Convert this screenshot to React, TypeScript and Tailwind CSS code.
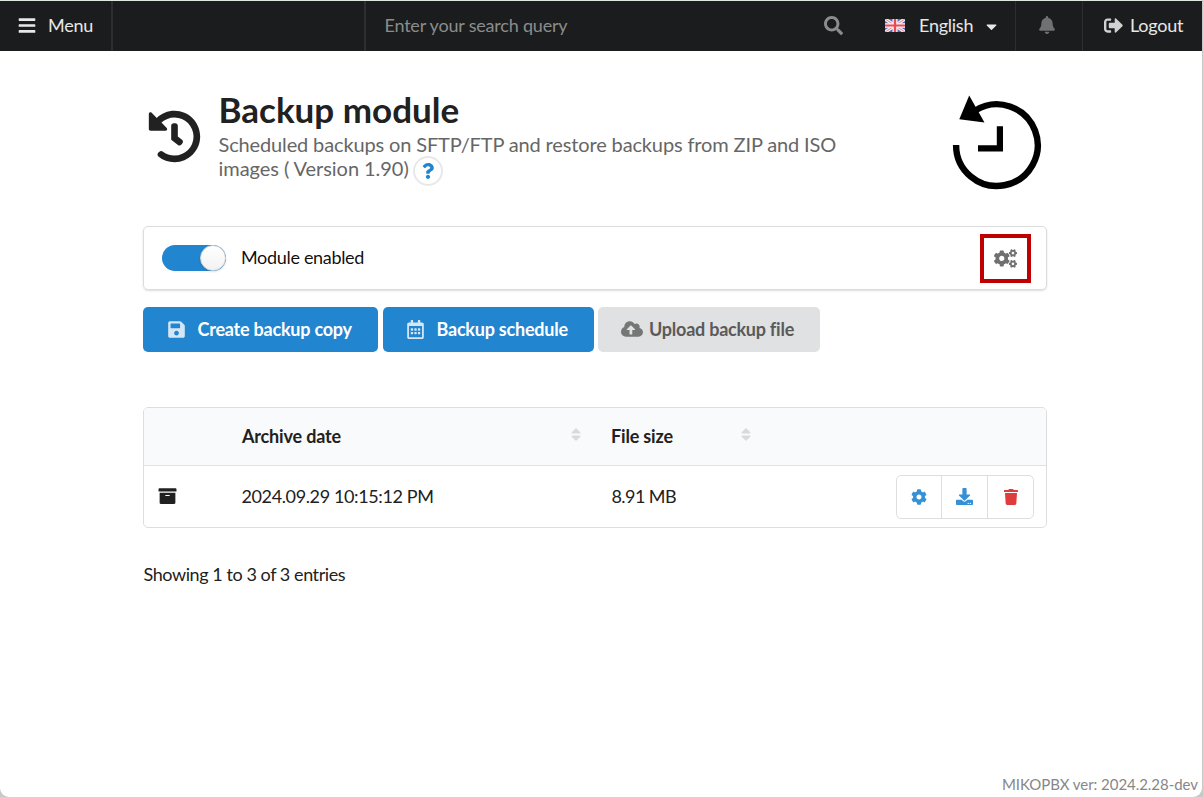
import type { ReactNode } from "react";
import {
  FaArchive,
  FaBars,
  FaBell,
  FaCaretDown,
  FaCloudUploadAlt,
  FaCog,
  FaCogs,
  FaDownload,
  FaHistory,
  FaQuestion,
  FaRegCalendarAlt,
  FaSave,
  FaSearch,
  FaSignOutAlt,
  FaSort,
  FaTrash,
} from "react-icons/fa";

function UkFlag() {
  return (
    <svg width="20" height="13" viewBox="0 0 20 14" preserveAspectRatio="none" className="-mt-[1px] shrink-0">
      <rect width="20" height="14" fill="#5468b8" />
      <path d="M0 0L20 14M20 0L0 14" stroke="#f3eef4" strokeWidth="3.6" />
      <path d="M0 0L20 14M20 0L0 14" stroke="#e88a94" strokeWidth="1.1" />
      <path d="M10 0V14M0 7H20" stroke="#fbf3f5" strokeWidth="5" />
      <path d="M10 0V14M0 7H20" stroke="#ea4a55" strokeWidth="2.4" />
    </svg>
  );
}

function ModuleLogo() {
  return (
    <svg width="92" height="96" viewBox="0 0 92 96" fill="none" className="shrink-0">
      <path d="M6.1 50A40.8 40.8 0 1 0 25.5 15.4" stroke="#000" strokeWidth="6.4" />
      <path d="M19.2 0.5L9.3 24.2L34.5 27.4Z" fill="#000" />
      <path d="M28 53.4H49.9V31.2" stroke="#000" strokeWidth="6.2" />
    </svg>
  );
}

function TopBar() {
  return (
    <header className="flex h-[51px] items-stretch border-t border-[#dfe8e0] bg-[#1b1c1d] text-[18px] tracking-[-0.25px] text-white/90">
      <div className="flex w-[113px] items-center border-r-2 border-[#2d2e2f] pl-[18px]">
        <FaBars className="-mt-[1px] h-[19px] w-[18px]" />
        <span className="-mt-[2px] ml-[12px]">Menu</span>
      </div>
      <div className="w-[253px] border-r-2 border-[#2d2e2f]" />
      <div className="flex w-[496px] items-center justify-between pr-[19px] pl-[18.5px] text-[#8b8c8c]">
        <span className="-mt-[2px] tracking-[-0.2px]">Enter your search query</span>
        <FaSearch className="-mt-[2px] h-[19px] w-[19px]" />
      </div>
      <div className="flex w-[154px] items-center border-r border-[#2d2e2f] pl-[23px]">
        <UkFlag />
        <span className="-mt-[2px] ml-[14px]">English</span>
        <FaCaretDown className="ml-[13px] h-[17px] w-[11px]" />
      </div>
      <div className="flex w-[67px] items-center justify-center border-r border-[#2d2e2f] pr-[5px]">
        <FaBell className="-mt-[2px] h-[18px] w-[16px] text-[#707171]" />
      </div>
      <div className="flex items-center pl-[21px]">
        <FaSignOutAlt className="-mt-[2px] h-[19px] w-[19px] text-[#d1d2d2]" />
        <span className="-mt-[2px] ml-[7px]">Logout</span>
      </div>
    </header>
  );
}

function ActionCell({ children }: { children: ReactNode }) {
  return <button className="flex w-[45px] items-center justify-center">{children}</button>;
}

export default function App() {
  return (
    <div className="flex h-[797px] w-[1203px] flex-col overflow-hidden bg-[#c8c8c8] font-['Lato',sans-serif] text-[18px] whitespace-nowrap text-[#212121]">
      <div className="flex h-[797px] w-[1202px] flex-col rounded-b-[9px] bg-white">
        <TopBar />
        <main className="ml-[143px] flex w-[904px] grow flex-col">
          <div className="flex h-[175px] items-start">
            <FaHistory className="mt-[59px] ml-[5px] h-[53px] w-[53px] shrink-0" />
            <div className="ml-[17px] pt-[37px]">
              <h1 className="h-[44px] pl-[0.5px] text-[35px] leading-[43px] font-bold">Backup module</h1>
              <div className="text-[20px] leading-6 text-[#666]">
                <p className="pl-[0.5px] tracking-[-0.14px]">
                  Scheduled backups on SFTP/FTP and restore backups from ZIP and ISO
                </p>
                <p className="flex pl-[0.5px] tracking-[-0.05px]">
                  <span>images ( Version 1.90)</span>
                  <span className="ml-[4px] flex h-[30px] w-[30px] items-center justify-center rounded-full border-2 border-[#e8e8e8] bg-white">
                    <FaQuestion className="h-[16px] w-[12px] text-[#2185d0]" />
                  </span>
                </p>
              </div>
            </div>
            <div className="mt-[44px] mr-[5px] ml-auto">
              <ModuleLogo />
            </div>
          </div>

          <section className="flex h-[64px] items-center rounded-[5px] border border-[#dcdcdd] pr-[15px] pl-[18px] text-black/95 shadow-[0_1px_2px_0_rgba(34,36,38,0.15)]">
            <div className="flex h-[26px] w-[64px] justify-end rounded-full bg-[#2185d0]">
              <div className="h-[26px] w-[26px] rounded-full border border-[#d2d3d3] bg-linear-to-b from-white to-[#f2f2f2] shadow-[0_1px_2px_0_rgba(34,36,38,0.15)]" />
            </div>
            <span className="-mt-[2px] ml-[15px] tracking-[-0.32px]">Module enabled</span>
            <div className="ml-auto flex h-[49px] w-[51px] items-center justify-center border-4 border-[#c00000]">
              <FaCogs className="h-[19px] w-[23px] text-[#707070]" />
            </div>
          </section>

          <div className="mt-[17px] flex h-[45px] font-bold tracking-[-0.22px] text-white">
            <button className="flex w-[235px] items-center rounded-[5px] bg-[#2185d0] pl-[25px]">
              <FaSave className="h-[19px] w-[17px] text-white/80" />
              <span className="ml-[12.5px]">Create backup copy</span>
            </button>
            <button className="ml-[5px] flex w-[211px] items-center rounded-[5px] bg-[#2185d0] pl-[24px]">
              <FaRegCalendarAlt className="-mt-[1px] h-[19px] w-[17px] text-white/80" />
              <span className="ml-[12.5px]">Backup schedule</span>
            </button>
            <button className="ml-[4px] flex w-[222px] items-center rounded-[5px] bg-[#e0e1e2] pl-[23px] tracking-[-0.24px] text-[#5a5a5b]">
              <FaCloudUploadAlt className="-mt-[1px] h-[18px] w-[22px] text-[#767676]" />
              <span className="ml-[6px]">Upload backup file</span>
            </button>
          </div>

          <section className="mt-[55px] h-[121px] overflow-hidden rounded-[5px] border border-[#dedede]">
            <div className="flex h-[58px] items-center border-b border-[#e1e2e3] bg-[#f9fafb] pl-[98px] font-bold tracking-[-0.17px]">
              <span className="w-[329px]">Archive date</span>
              <FaSort className="-mt-[4px] h-[17px] w-[10px] text-[#d9dadb]" />
              <span className="ml-[30px] w-[130px]">File size</span>
              <FaSort className="-mt-[4px] h-[17px] w-[10px] text-[#d9dadb]" />
            </div>
            <div className="flex h-[61px] items-center pl-[14px]">
              <FaArchive className="-mt-[1px] h-[18px] w-[19px]" />
              <span className="-mt-[1px] ml-[64.5px] w-[370px] tracking-[-0.38px]">2024.09.29 10:15:12 PM</span>
              <span className="-mt-[1px] tracking-[-0.58px]">8.91 MB</span>
              <div className="mr-[12px] ml-auto flex h-[44px] divide-x divide-[#dedede] rounded-[5px] border border-[#dedede]">
                <ActionCell>
                  <FaCog className="h-[16px] w-[16px] text-[#3690d5]" />
                </ActionCell>
                <div className="flex w-[46px] items-center justify-center">
                  <FaDownload className="h-[17px] w-[17px] text-[#3690d5]" />
                </div>
                <ActionCell>
                  <FaTrash className="h-[16px] w-[14px] text-[#df3d3d]" />
                </ActionCell>
              </div>
            </div>
          </section>

          <p className="mt-[33px] pl-[0.5px] leading-[26px] tracking-[-0.43px]">Showing 1 to 3 of 3 entries</p>
        </main>
        <footer className="pr-[4px] pb-[3px] text-right text-[15px] leading-[20px] tracking-[-0.04px] text-[#878787]">
          MIKOPBX ver: 2024.2.28-dev
        </footer>
      </div>
    </div>
  );
}
